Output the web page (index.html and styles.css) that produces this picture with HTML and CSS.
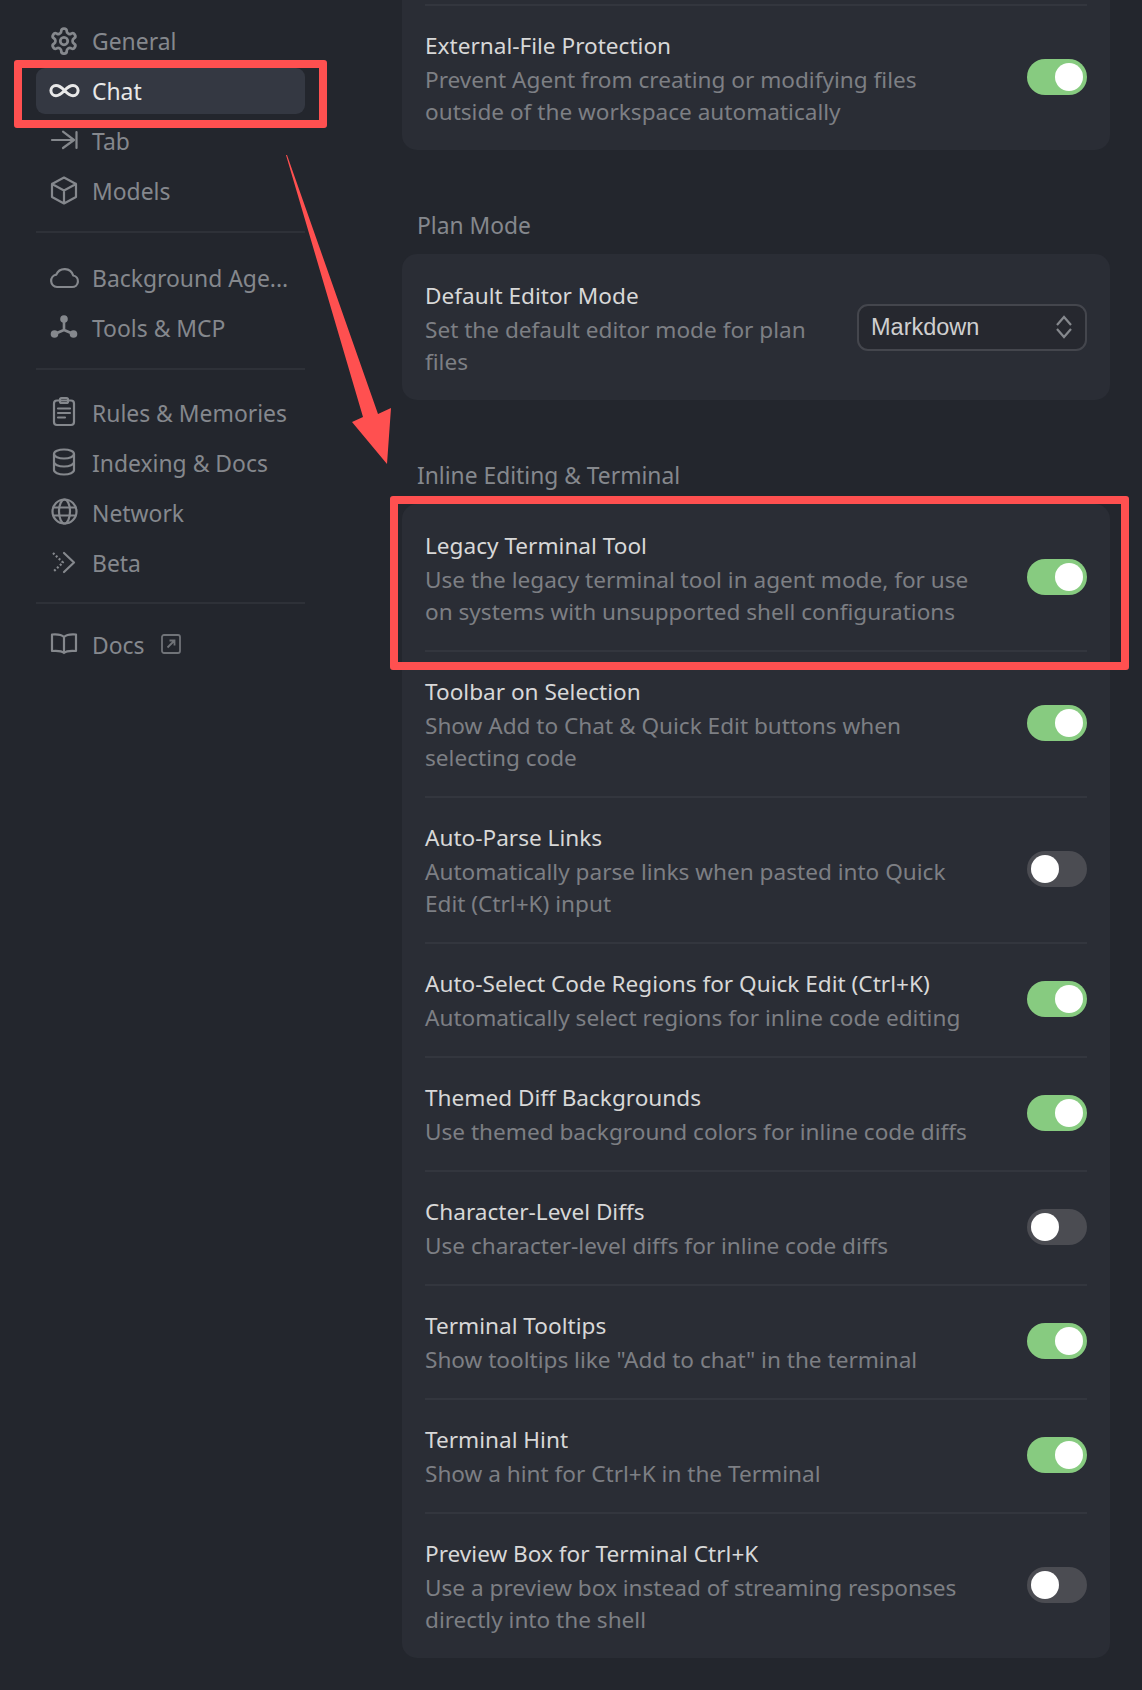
FILE: index.html
```html
<!DOCTYPE html>
<html lang="en">
<head>
    <meta charset="UTF-8">
    <title>Cursor Settings - Chat</title>
    <link rel="stylesheet" href="styles.css">
</head>
<body>

<div class="layout">
    <nav class="sidebar">
        <div class="nav-group">
            <a class="nav-item"><svg class="icon" viewBox="0 0 24 24"><path d="M12.22 2h-.44a2 2 0 0 0-2 2v.18a2 2 0 0 1-1 1.73l-.43.25a2 2 0 0 1-2 0l-.15-.08a2 2 0 0 0-2.73.73l-.22.38a2 2 0 0 0 .73 2.73l.15.1a2 2 0 0 1 1 1.72v.51a2 2 0 0 1-1 1.74l-.15.09a2 2 0 0 0-.73 2.73l.22.38a2 2 0 0 0 2.73.73l.15-.08a2 2 0 0 1 2 0l.43.25a2 2 0 0 1 1 1.73V20a2 2 0 0 0 2 2h.44a2 2 0 0 0 2-2v-.18a2 2 0 0 1 1-1.73l.43-.25a2 2 0 0 1 2 0l.15.08a2 2 0 0 0 2.73-.73l.22-.39a2 2 0 0 0-.73-2.73l-.15-.08a2 2 0 0 1-1-1.74v-.5a2 2 0 0 1 1-1.74l.15-.09a2 2 0 0 0 .73-2.73l-.22-.38a2 2 0 0 0-2.73-.73l-.15.08a2 2 0 0 1-2 0l-.43-.25a2 2 0 0 1-1-1.73V4a2 2 0 0 0-2-2z"/><circle cx="12" cy="12" r="3"/></svg>General</a>
            <a class="nav-item active"><svg class="icon" viewBox="0 0 30 30"><path d="M15.500 14.500c-3-3.200-5.500-5-8.500-5a5.100 5.100 0 0 0 0 10.200c3 0 5.500-2 8.500-5.200s5.500-5 8.500-5a5.100 5.100 0 0 1 0 10.200c-3 0-5.500-2-8.500-5.200z"/></svg>Chat</a>
            <a class="nav-item"><svg class="icon" viewBox="0 0 30 30"><path d="M3 14h22M14 5.700 25 14 14 22M27.500 6v16"/></svg>Tab</a>
            <a class="nav-item"><svg class="icon" viewBox="0 0 30 30"><path d="M15 1.500 27 8v13l-12 6.500L3 21V8zM3 8l12 6.500L27 8M15 14.500v13"/></svg>Models</a>
        </div>
        <div class="nav-group">
            <a class="nav-item"><svg class="icon" viewBox="0 0 30 30"><path d="M8 24h15a5.800 5.800 0 0 0 1.200-11.500A9 9 0 0 0 7.300 11.700 6.200 6.200 0 0 0 8 24z"/></svg>Background Age...</a>
            <a class="nav-item"><svg class="icon" viewBox="0 0 30 30"><path class="thick" d="M15 6v11L5.500 21M15 17l9.500 4"/><circle class="dot" cx="15" cy="6" r="3.800"/><circle class="dot" cx="5.500" cy="21" r="3.800"/><circle class="dot" cx="24.500" cy="21" r="3.800"/></svg>Tools &amp; MCP</a>
        </div>
        <div class="nav-group">
            <a class="nav-item"><svg class="icon" viewBox="0 0 30 30"><rect x="5" y="2.500" width="20" height="24.500" rx="3"/><rect x="11" y="0" width="8" height="5" rx="1.500"/><path d="M9 10.500h12M9 15h12M9 19.500h7"/></svg>Rules &amp; Memories</a>
            <a class="nav-item"><svg class="icon" viewBox="0 0 30 30"><ellipse cx="15" cy="6" rx="10" ry="4.500"/><path d="M5 6v16c0 2.500 4.500 4.500 10 4.500s10-2 10-4.500V6M5 14c0 2.500 4.500 4.500 10 4.500s10-2 10-4.500"/></svg>Indexing &amp; Docs</a>
            <a class="nav-item"><svg class="icon" viewBox="0 0 30 30"><circle cx="15.500" cy="13.500" r="12"/><ellipse cx="15.500" cy="13.500" rx="5.500" ry="12"/><path d="M4.500 9.500h22M4.500 17.500h22"/></svg>Network</a>
            <a class="nav-item"><svg class="icon" viewBox="0 0 30 30"><path d="M15 5l10 9.500-10 9.500"/><path class="dashed" d="M4 5l10 9.500-10 9.500"/></svg>Beta</a>
        </div>
        <div class="nav-group">
            <a class="nav-item"><svg class="icon" viewBox="0 0 30 30"><path d="M15 7C13 5 9 4 3 4.500V21C9 20.500 13 21 15 23 17 21 21 20.500 27 21V4.500C21 4 17 5 15 7zM15 7v16"/></svg>Docs<svg class="ext-icon" viewBox="0 0 20 20"><rect x="1" y="1" width="18" height="18" rx="2"/><path d="M6.500 13.500l7-7M8.500 6.500h5v5"/></svg></a>
        </div>
    </nav>

    <main class="content">
        <div class="card card-cut">
            <div class="row">
                <div class="row-text">
                    <div class="row-title">External-File Protection</div>
                    <div class="row-desc">Prevent Agent from creating or modifying files<br>outside of the workspace automatically</div>
                </div>
                <div class="toggle on"></div>
            </div>
        </div>

        <div class="section-title">Plan Mode</div>
        <div class="card">
            <div class="row">
                <div class="row-text">
                    <div class="row-title">Default Editor Mode</div>
                    <div class="row-desc">Set the default editor mode for plan<br>files</div>
                </div>
                <div class="select">
                    <span>Markdown</span>
                    <svg class="select-arrows" viewBox="0 0 18 24"><path d="M2 10l7-8 7 8M2 14l7 8 7-8"/></svg>
                </div>
            </div>
        </div>

        <div class="section-title">Inline Editing &amp; Terminal</div>
        <div class="card">
            <div class="row">
                <div class="row-text">
                    <div class="row-title">Legacy Terminal Tool</div>
                    <div class="row-desc">Use the legacy terminal tool in agent mode, for use<br>on systems with unsupported shell configurations</div>
                </div>
                <div class="toggle on"></div>
            </div>
            <div class="row">
                <div class="row-text">
                    <div class="row-title">Toolbar on Selection</div>
                    <div class="row-desc">Show Add to Chat &amp; Quick Edit buttons when<br>selecting code</div>
                </div>
                <div class="toggle on"></div>
            </div>
            <div class="row">
                <div class="row-text">
                    <div class="row-title">Auto-Parse Links</div>
                    <div class="row-desc">Automatically parse links when pasted into Quick<br>Edit (Ctrl+K) input</div>
                </div>
                <div class="toggle"></div>
            </div>
            <div class="row">
                <div class="row-text">
                    <div class="row-title">Auto-Select Code Regions for Quick Edit (Ctrl+K)</div>
                    <div class="row-desc">Automatically select regions for inline code editing</div>
                </div>
                <div class="toggle on"></div>
            </div>
            <div class="row">
                <div class="row-text">
                    <div class="row-title">Themed Diff Backgrounds</div>
                    <div class="row-desc">Use themed background colors for inline code diffs</div>
                </div>
                <div class="toggle on"></div>
            </div>
            <div class="row">
                <div class="row-text">
                    <div class="row-title">Character-Level Diffs</div>
                    <div class="row-desc">Use character-level diffs for inline code diffs</div>
                </div>
                <div class="toggle"></div>
            </div>
            <div class="row">
                <div class="row-text">
                    <div class="row-title">Terminal Tooltips</div>
                    <div class="row-desc">Show tooltips like "Add to chat" in the terminal</div>
                </div>
                <div class="toggle on"></div>
            </div>
            <div class="row">
                <div class="row-text">
                    <div class="row-title">Terminal Hint</div>
                    <div class="row-desc">Show a hint for Ctrl+K in the Terminal</div>
                </div>
                <div class="toggle on"></div>
            </div>
            <div class="row">
                <div class="row-text">
                    <div class="row-title">Preview Box for Terminal Ctrl+K</div>
                    <div class="row-desc">Use a preview box instead of streaming responses<br>directly into the shell</div>
                </div>
                <div class="toggle"></div>
            </div>
        </div>
    </main>
</div>

<!-- annotations drawn over the screenshot -->
<div class="frame frame-chat"></div>
<div class="frame frame-legacy"></div>
<svg class="arrow" viewBox="0 0 1142 1690"><polygon points="286,155 287,155 378,414 391,408 387,464 352,422 363,417"/></svg>

</body>
</html>
```

FILE: styles.css
```css
* {
    margin: 0;
    padding: 0;
    box-sizing: border-box;
}
body {
    font-family: "Noto Sans", "Open Sans", sans-serif;
    background-color: #23262d;
    color: #d8d8d8;
    height: 1690px;
    overflow: hidden;
}
.layout {
    display: flex;
    align-items: flex-start;
}

/* sidebar */
.sidebar {
    width: 269px;
    margin-left: 36px;
    padding-top: 18px;
    flex-shrink: 0;
}
.nav-group {
    display: flex;
    flex-direction: column;
    gap: 4px;
    padding-bottom: 17px;
    margin-bottom: 20px;
    border-bottom: 2px solid #2e3138;
}
.nav-group:first-child {
    margin-bottom: 22px;
}
.nav-group:nth-child(3) {
    padding-bottom: 16px;
    margin-bottom: 18px;
}
.nav-group:last-child {
    border-bottom: none;
}
.nav-item {
    display: flex;
    align-items: center;
    height: 46px;
    padding-left: 13px;
    border-radius: 9px;
    font-size: 22.900px;
    color: #85888d;
    white-space: nowrap;
}
.nav-item.active {
    background-color: #343842;
    color: #e8e8e8;
}
.icon {
    width: 30px;
    height: 30px;
    margin-right: 13px;
    flex-shrink: 0;
    fill: none;
    stroke: #85888d;
    stroke-width: 2.200;
    stroke-linecap: round;
    stroke-linejoin: round;
    overflow: visible;
}
.nav-item.active .icon {
    stroke: #e8e8e8;
    stroke-width: 3;
}
.icon .dot {
    fill: #85888d;
    stroke: none;
}
.icon .thick {
    stroke-width: 2.600;
}
.icon .dashed {
    stroke-dasharray: 2 2;
    stroke-linecap: butt;
}
.ext-icon {
    width: 20px;
    height: 20px;
    margin-left: 16px;
    margin-top: -2px;
    fill: none;
    stroke: #707378;
    stroke-width: 1.800;
}

/* main column */
.content {
    width: 708px;
    margin-left: 97px;
}
.card {
    background-color: #2a2d35;
    border-radius: 15px;
    padding: 2px 23px 0;
}
.card-cut {
    border-radius: 0 0 15px 15px;
    padding-top: 4px;
}
.card-cut .row {
    border-top: 2px solid #33363e;
}
.section-title {
    font-size: 22.800px;
    line-height: 34px;
    color: #85888d;
    margin: 59px 0 11px 15px;
}
.row {
    display: flex;
    justify-content: space-between;
    align-items: center;
    padding: 22px 0;
    border-bottom: 2px solid #33363e;
}
.row:last-child {
    border-bottom: none;
}
.row-title {
    font-size: 22.600px;
    line-height: 36px;
    color: #d8d8d8;
    white-space: nowrap;
}
.row-desc {
    font-size: 22.600px;
    line-height: 32px;
    color: #7d7f84;
    white-space: nowrap;
}

/* toggle */
.toggle {
    width: 60px;
    height: 36px;
    margin-bottom: 2px;
    padding: 4px;
    border-radius: 18px;
    background-color: #4b4c52;
    display: flex;
    flex-shrink: 0;
}
.toggle::after {
    content: "";
    width: 28px;
    height: 28px;
    border-radius: 50%;
    background-color: #fff;
}
.toggle.on {
    background-color: #87cb80;
    justify-content: flex-end;
}

/* dropdown */
.select {
    width: 230px;
    height: 47px;
    margin-bottom: 2px;
    padding: 0 12px;
    border: 2px solid #44464d;
    border-radius: 11px;
    background-color: #26282f;
    display: flex;
    justify-content: space-between;
    align-items: center;
    font-family: "Liberation Sans", Arial, sans-serif;
    font-size: 23.500px;
    color: #cfcfcf;
}
.select-arrows {
    width: 18px;
    height: 24px;
    fill: none;
    stroke: #85888d;
    stroke-width: 2.200;
}

/* red annotations */
.frame {
    position: absolute;
    border: 8px solid #ff5050;
    border-radius: 3px;
}
.frame-chat {
    left: 14px;
    top: 60px;
    width: 313px;
    height: 68px;
}
.frame-legacy {
    left: 390px;
    top: 496px;
    width: 739px;
    height: 174px;
}
.arrow {
    position: absolute;
    left: 0;
    top: 0;
    width: 1142px;
    height: 1690px;
    fill: #ff5050;
    pointer-events: none;
}
```
